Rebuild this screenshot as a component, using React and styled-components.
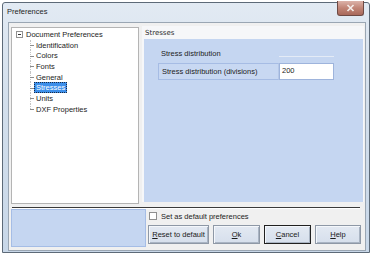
import React from 'react';
import styled, { createGlobalStyle } from 'styled-components';

const GlobalStyle = createGlobalStyle`
  html, body {
    margin: 0;
    background: #ffffff;
  }
  body {
    font-family: "Liberation Sans", Arial, sans-serif;
    font-size: 7.5px;
    color: #1c1c1c;
  }
`;

const Window = styled.div`
  box-sizing: border-box;
  display: flex;
  flex-direction: column;
  width: 368px;
  height: 251px;
  margin: 2px 0 0 2px;
  border: 1px solid #5d6a78;
  border-radius: 3px 3px 0 0;
  background: linear-gradient(180deg, #e2eaf3 0%, #d3dfec 40%, #c8d7e8 100%);
  box-shadow: 0 2px 0 #4ea7ba;
`;

const TitleBar = styled.div`
  display: flex;
  align-items: flex-start;
  height: 19px;
  padding: 0 5px 0 4px;
`;

const Title = styled.span`
  margin-top: 4px;
  font-size: 7.5px;
  color: #1e1e1e;
`;

const CloseButton = styled.div`
  display: flex;
  align-items: center;
  justify-content: center;
  width: 25px;
  height: 14px;
  margin: -2px 0 0 auto;
  border: 1px solid #6e4a44;
  border-top: none;
  border-radius: 0 0 3px 3px;
  background: linear-gradient(180deg, #dcb3aa 0%, #c18576 50%, #a9695b 100%);
`;

const Client = styled.div`
  box-sizing: border-box;
  flex: 1;
  display: flex;
  flex-direction: column;
  margin: 0 3px 1px 5px;
  padding: 3px 1px 2px 2px;
  border: 1px solid #9aa6b3;
  background: #f0f0f0;
`;

const MainRow = styled.div`
  display: flex;
  gap: 3px;
  height: 179px;
`;

const TreePanel = styled.div`
  box-sizing: border-box;
  width: 128px;
  height: 177px;
  margin-top: 1px;
  padding: 1px 0 0 4px;
  border: 1px solid #b4b4b4;
  background: #ffffff;
`;

const TreeRoot = styled.div`
  display: flex;
  align-items: center;
  height: 10.7px;
  gap: 3px;
`;

const Expander = styled.span`
  box-sizing: border-box;
  position: relative;
  width: 7px;
  height: 7px;
  border: 1px solid #929292;
  background: #fff;
  &::after {
    content: '';
    position: absolute;
    left: 1px;
    right: 1px;
    top: 2px;
    border-top: 1px solid #333;
  }
`;

const TreeChildren = styled.div`
  margin-left: 14px;
`;

const TreeItem = styled.div`
  position: relative;
  display: flex;
  align-items: center;
  height: 10.7px;
  padding-left: 4px;
  &::before {
    content: '';
    position: absolute;
    left: 0;
    top: 0;
    bottom: ${(p) => (p.$last ? '50%' : '0')};
    border-left: 1px dotted #c4c4c4;
  }
  &::after {
    content: '';
    position: absolute;
    left: 0;
    top: 50%;
    width: 4px;
    border-top: 1px solid #8c8c8c;
  }
`;

const ItemLabel = styled.span`
  padding: 0 1px;
  line-height: 9px;
  border: 1px ${(p) => (p.$selected ? 'dotted #1a2a44' : 'solid transparent')};
  background: ${(p) => (p.$selected ? '#3d8fea' : 'transparent')};
  color: ${(p) => (p.$selected ? '#ffffff' : '#1c1c1c')};
`;

const RightPanel = styled.div`
  display: flex;
  flex-direction: column;
  width: 222px;
  height: 176px;
  background: #f6f7f9;
`;

const PanelHeader = styled.div`
  height: 13px;
  padding-left: 3px;
  line-height: 14px;
  font-family: "DejaVu Sans", Verdana, sans-serif;
  font-size: 7px;
  color: #2d2d2d;
`;

const PanelBody = styled.div`
  flex: 1;
  margin: 0 1px 0 2px;
  padding: 10px 0 0 14px;
  background: #c5d6f1;
`;

const PropGrid = styled.div`
  display: grid;
  grid-template-columns: 121px 55px;
  row-gap: 4px;
`;

const CategoryLabel = styled.div`
  height: 10px;
  padding-left: 3px;
  line-height: 10px;
`;

const CategoryLine = styled.div`
  align-self: end;
  margin-bottom: 2px;
  border-top: 1px solid #e4ebf6;
`;

const PropLabel = styled.div`
  box-sizing: border-box;
  height: 17px;
  padding-left: 3px;
  line-height: 15px;
  border: 1px solid #a6bce4;
  border-right-color: #b6c8e8;
  background: #c8d8f2;
`;

const PropValue = styled.div`
  box-sizing: border-box;
  height: 17px;
  padding-left: 2px;
  line-height: 13px;
  border: 1px solid #9eb4dc;
  background: #ffffff;
`;

const Separator = styled.div`
  margin-top: 2px;
  height: 1px;
  background: #3a3a3a;
  border-bottom: 1px solid #ffffff;
  margin-right: 4px;
  margin-left: 1px;
`;

const BottomRow = styled.div`
  display: flex;
  gap: 2px;
  height: 38px;
`;

const InfoBox = styled.div`
  box-sizing: border-box;
  width: 135px;
  border: 1px solid #a5bde6;
  background: #c5d6f1;
`;

const Actions = styled.div`
  display: flex;
  flex-direction: column;
  gap: 4px;
  padding-top: 2px;
`;

const CheckRow = styled.label`
  display: flex;
  align-items: center;
  gap: 4px;
  height: 10px;
  padding-left: 1px;
`;

const CheckBox = styled.span`
  box-sizing: border-box;
  width: 8px;
  height: 8px;
  border: 1px solid #8f8f8f;
  background: #ffffff;
`;

const Buttons = styled.div`
  display: flex;
  gap: 4px;
`;

const Button = styled.div`
  box-sizing: border-box;
  display: flex;
  align-items: center;
  justify-content: center;
  width: ${(p) => p.$w}px;
  height: 19px;
  border: 1px solid ${(p) => (p.$default ? '#202020' : '#8e98a6')};
  box-shadow: inset 1px 1px 0 #f4f7fb, inset -1px -1px 0 #a9b4c3;
  background: linear-gradient(180deg, #e3e9f2 0%, #d6dfec 100%);
  color: #1a1a1a;
  u {
    text-decoration: underline;
  }
`;

const items = ['Identification', 'Colors', 'Fonts', 'General', 'Stresses', 'Units', 'DXF Properties'];

const buttons = [
  { key: 'reset', w: 61, hot: 'R', rest: 'eset to default' },
  { key: 'ok', w: 47, hot: 'O', rest: 'k' },
  { key: 'cancel', w: 47, hot: 'C', rest: 'ancel', def: true },
  { key: 'help', w: 46, hot: 'H', rest: 'elp' },
];

export default function App() {
  return (
    <>
      <GlobalStyle />
      <Window>
        <TitleBar>
          <Title>Preferences</Title>
          <CloseButton>
            <svg width="9" height="8" viewBox="0 0 9 8">
              <path d="M1.5 1 L7.5 7 M7.5 1 L1.5 7" stroke="#f4ece9" strokeWidth="1.7" />
            </svg>
          </CloseButton>
        </TitleBar>
        <Client>
          <MainRow>
            <TreePanel>
              <TreeRoot>
                <Expander />
                <span>Document Preferences</span>
              </TreeRoot>
              <TreeChildren>
                {items.map((name, i) => (
                  <TreeItem key={name} $last={i === items.length - 1}>
                    <ItemLabel $selected={name === 'Stresses'}>{name}</ItemLabel>
                  </TreeItem>
                ))}
              </TreeChildren>
            </TreePanel>
            <RightPanel>
              <PanelHeader>Stresses</PanelHeader>
              <PanelBody>
                <PropGrid>
                  <CategoryLabel>Stress distribution</CategoryLabel>
                  <CategoryLine />
                  <PropLabel>Stress distribution (divisions)</PropLabel>
                  <PropValue>200</PropValue>
                </PropGrid>
              </PanelBody>
            </RightPanel>
          </MainRow>
          <Separator />
          <BottomRow>
            <InfoBox />
            <Actions>
              <CheckRow>
                <CheckBox />
                <span>Set as default preferences</span>
              </CheckRow>
              <Buttons>
                {buttons.map((b) => (
                  <Button key={b.key} $w={b.w} $default={b.def}>
                    <span>
                      <u>{b.hot}</u>
                      {b.rest}
                    </span>
                  </Button>
                ))}
              </Buttons>
            </Actions>
          </BottomRow>
        </Client>
      </Window>
    </>
  );
}
